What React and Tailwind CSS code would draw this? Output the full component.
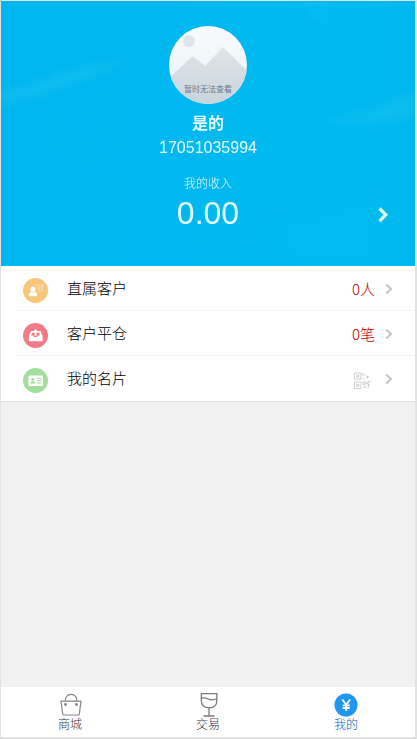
const rows = [
  { id: 'clients', label: '直属客户', value: '0人', Icon: ClientIcon },
  { id: 'closed', label: '客户平仓', value: '0笔', Icon: TrayIcon },
  { id: 'card', label: '我的名片', Icon: CardIcon },
];

const tabs = [
  { id: 'mall', label: '商城', Icon: BagIcon },
  { id: 'trade', label: '交易', Icon: GlassIcon },
  { id: 'mine', label: '我的', Icon: YenIcon, active: true },
];

export default function App() {
  return (
    <div className="flex min-h-screen flex-col border border-r-2 border-b-2 border-[#e2e2e2] bg-[#f1f1f1] font-['Liberation_Sans','Noto_Sans_CJK_SC',sans-serif]">
      <Profile />
      <main className="flex-1">
        <ul className="border-b border-[#dedede] bg-white">
          {rows.map((row) => <Row key={row.id} {...row} />)}
        </ul>
      </main>
      <TabBar />
    </div>
  );
}

function Profile() {
  return (
    <header className="relative bg-[#00b9f0] pt-6 pb-9 text-center text-[#e4fbff]">
      <Backdrop />
      <div className="relative flex flex-col items-center">
        <Avatar />
        <h1 className="mt-2 text-base leading-6 font-bold">是的</h1>
        <p className="text-base leading-6">17051035994</p>
        <a href="#income" className="mt-3 block w-full">
          <span className="block text-xs leading-6 font-light">我的收入</span>
          <span className="block text-[32px] leading-[34px]">0.00</span>
          <svg viewBox="0 0 12 18" className="absolute right-[26px] bottom-1.5 h-[18px] w-3" fill="none" stroke="currentColor" strokeWidth="3.2" aria-hidden="true">
            <path d="M2.500 2.500 8.800 8.800 2.500 15.100" />
          </svg>
        </a>
      </div>
    </header>
  );
}

// Faint light streaks behind the profile.
function Backdrop() {
  return (
    <svg viewBox="0 0 415 265" preserveAspectRatio="none" className="absolute inset-0 size-full" aria-hidden="true">
      <defs>
        <filter id="soft"><feGaussianBlur stdDeviation="5" /></filter>
        <linearGradient id="side" x1="0" x2="1">
          <stop offset="0" stopColor="#00b6ee" />
          <stop offset="0.4" stopColor="#00b8ef" />
          <stop offset="0.85" stopColor="#00bbef" />
          <stop offset="1" stopColor="#00b7ee" />
        </linearGradient>
      </defs>
      <rect width="415" height="265" fill="url(#side)" />
      <g fill="#35cdf5" filter="url(#soft)">
        <path d="M0 92 70 70 140 54 90 76 40 94 0 103Z" opacity="0.3" />
        <path d="M310 122 375 108 415 88V118L360 120Z" opacity="0.25" />
        <path d="M300 0H335L318 26Z" opacity="0.1" />
        <path d="M45 100 115 164 55 160Z" opacity="0.06" />
        <path d="M240 225 415 190V265H300Z" opacity="0.06" />
      </g>
    </svg>
  );
}

function Avatar() {
  return (
    <svg viewBox="0 0 78 78" className="mt-px size-[78px]" role="img" aria-label="avatar">
      <defs>
        <clipPath id="round"><circle cx="39" cy="39" r="39" /></clipPath>
        <linearGradient id="sky" x2="0" y2="1">
          <stop offset="0" stopColor="#f8fbfd" />
          <stop offset="1" stopColor="#e9f1f4" />
        </linearGradient>
        <linearGradient id="hill" x2="0" y2="1">
          <stop offset="0" stopColor="#e0e5e9" />
          <stop offset="1" stopColor="#c8d4dd" />
        </linearGradient>
      </defs>
      <g clipPath="url(#round)">
        <rect width="78" height="78" fill="url(#sky)" />
        <circle cx="20" cy="15" r="6" fill="#dfe5ea" />
        <path d="M0 52 24 30 36 40 54 21 78 45V78H0Z" fill="url(#hill)" />
        <text x="39" y="66" textAnchor="middle" fontSize="8" fill="#6a7c8a">暂时无法查看</text>
      </g>
    </svg>
  );
}

function Row({ id, label, value, Icon }) {
  return (
    <li className="group">
      <a href={`#${id}`} className="flex h-[45px] items-center px-[22px]">
        <Icon />
        <span className="ml-[19px] flex-1 text-[15px] leading-6 font-light text-black">{label}</span>
        {value
          ? <span className="font-['Noto_Sans_CJK_SC',sans-serif] text-[15px] leading-6 font-light text-[#c00000]">{value}</span>
          : <QrIcon />}
        <svg viewBox="0 0 8 12" className="ml-2.5 h-3 w-2" fill="none" stroke="#c6c6c6" strokeWidth="2.2" aria-hidden="true">
          <path d="M1.200 1.500 6 6 1.200 10.500" />
        </svg>
      </a>
      <div className="-mt-px ml-3.5 h-px bg-[#f5f5f5] group-last:hidden" />
    </li>
  );
}

function ClientIcon() {
  return (
    <svg viewBox="0 0 25 25" className="mt-1 size-[25px]" aria-hidden="true">
      <circle cx="12.500" cy="12.500" r="12.500" fill="#f8c57a" />
      <g fill="#fff">
        <circle cx="10" cy="11.200" r="2.600" />
        <path d="M5.800 18.300c0-3 1-4.600 2.800-4.800L10 15l1.400-1.500c1.800.2 2.800 1.800 2.800 4.800Z" />
      </g>
      <path d="M12 6.700h7.500v6.300H15M14 8.800h4M14.500 10.800h3.500" fill="none" stroke="#fff" strokeWidth="0.8" opacity="0.55" />
    </svg>
  );
}

function TrayIcon() {
  return (
    <svg viewBox="0 0 25 25" className="mt-1 size-[25px]" aria-hidden="true">
      <circle cx="12.500" cy="12.500" r="12.500" fill="#f17b86" />
      <path d="M8.500 8h8.300c.5 0 .9.300 1.100.8l1.400 4c.2.500.3 1 .3 1.500v3c0 .7-.4 1-1 1H6.900c-.6 0-1-.3-1-1v-3c0-.5.100-1 .3-1.500l1.300-4c.2-.5.500-.8 1-.8Z" fill="#fff" />
      <path d="M9.300 9.500h6.700l1 3h-2c-.3 1-1.200 1.500-2.400 1.500s-2.100-.5-2.400-1.500h-2Z" fill="#f17b86" />
      <path d="m12.600 6 3.200 3.500h-2.300v3.300h-1.800V9.500H9.400Z" fill="#fff" />
    </svg>
  );
}

function CardIcon() {
  return (
    <svg viewBox="0 0 25 25" className="mt-1 size-[25px]" aria-hidden="true">
      <circle cx="12.500" cy="12.500" r="12.500" fill="#a3dea0" />
      <rect x="5.500" y="7.500" width="14.500" height="10.500" rx="1" fill="#fff" />
      <g fill="#a3dea0">
        <circle cx="9.800" cy="11.200" r="1.500" />
        <path d="M7.300 15.500c0-1.600.9-2.300 2.500-2.300s2.500.7 2.500 2.300Z" />
        <path d="M14 10h4.500v1H14ZM14 12.300h4.500v1H14ZM14 14.600h4.500v1H14Z" />
      </g>
    </svg>
  );
}

function QrIcon() {
  return (
    <svg viewBox="0 0 17 17" className="mt-1 mr-1 size-[17px]" fill="none" stroke="#c4c4c4" strokeWidth="0.8" aria-hidden="true">
      <path d="M.5 1h6.500v6H.5ZM.5 10h6.500v6.500H.5Z" />
      <path d="M2.800 3h2v2h-2ZM2.800 12.300h2v2h-2ZM9 1v3M9 6.500h1.500M11 2v1.500M12 5h3M13.500 3.500v3M9 10h2v2.500H9ZM9 16l3-2.500M12 9.500v2h2v-2h2.500M13 13h3.500M14.500 11.500V16M10.500 15.500H13" />
    </svg>
  );
}

function TabBar() {
  return (
    <nav className="grid grid-cols-3 bg-white">
      {tabs.map(({ id, label, Icon, active }) => (
        <a key={id} href={`#${id}`} aria-current={active ? 'page' : undefined}
           className={`flex h-[50px] flex-col items-center pt-1.5 text-xs leading-4 font-light ${active ? 'text-[#0064c0]' : 'text-[#333]'}`}>
          <Icon />
          {label}
        </a>
      ))}
    </nav>
  );
}

function BagIcon() {
  return (
    <svg viewBox="0 0 24 24" className="size-6" fill="none" stroke="#858585" strokeWidth="1.200" aria-hidden="true">
      <path d="M3 8.200h20L21.300 21c-.1.700-.5 1-1.100 1H5.800c-.600 0-1-.3-1.100-1Z" strokeLinejoin="round" />
      <path d="M7.200 8.200C7.200 4 9.500 1.300 13 1.300S18.800 4 18.800 8.200" />
      <circle cx="7.500" cy="11.500" r="0.8" fill="#858585" />
      <circle cx="18.500" cy="11.500" r="0.8" fill="#858585" />
    </svg>
  );
}

function GlassIcon() {
  return (
    <svg viewBox="0 0 24 24" className="size-6" fill="none" stroke="#7c7c7c" strokeWidth="1.300" aria-hidden="true">
      <path d="M5.300.7h15.500v7c0 4.500-3 7-7.700 7s-7.800-2.500-7.800-7Z" strokeLinejoin="round" />
      <path d="M5.300 5.200c3-.8 4.700-.3 7 .8 2.800 1.400 5.500 1.200 8.500-.5M13 14.700v8.300M7.500 23h11" />
    </svg>
  );
}

function YenIcon() {
  return (
    <svg viewBox="0 0 24 24" className="size-6" aria-hidden="true">
      <circle cx="12" cy="12" r="11.500" fill="#2196ee" />
      <path d="m8.300 6.500 3.900 5.200 3.900-5.200M12.200 11.500v6.300M8.700 12.300h7M8.700 15h7" fill="none" stroke="#fff" strokeWidth="1.800" />
    </svg>
  );
}
